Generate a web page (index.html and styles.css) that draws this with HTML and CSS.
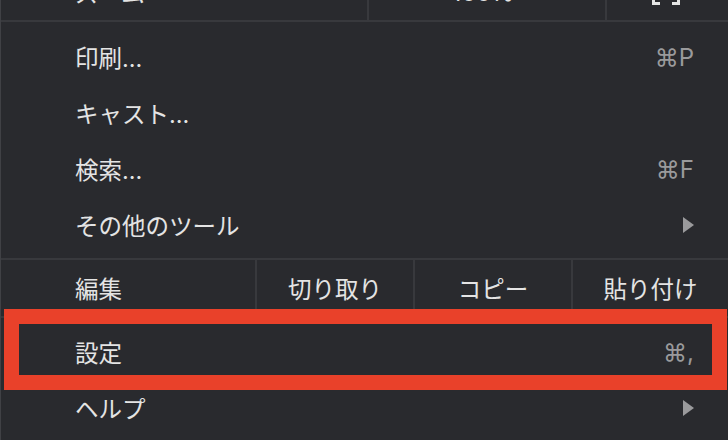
FILE: index.html
```html
<!DOCTYPE html>
<html lang="ja">
<head>
<meta charset="utf-8">
<link rel="stylesheet" href="styles.css">
</head>
<body>
<div class="menu">
  <div class="zoom-row">
    <div class="cell label">ズーム</div>
    <div class="cell zoom-ctrl"><span>−</span><span>100%</span><span>+</span></div>
    <div class="cell fs">
      <svg width="28" height="26" viewBox="0 0 28 26"><path d="M1.5 8V1.5H8M20 1.5h6.5V8M26.5 18v6.5H20M8 24.5H1.5V18" fill="none" stroke="#e4e4e4" stroke-width="3"/></svg>
    </div>
  </div>
  <div class="section top">
    <div class="item"><span>印刷...</span><span class="sc">⌘P</span></div>
    <div class="item"><span>キャスト...</span></div>
    <div class="item"><span>検索...</span><span class="sc">⌘F</span></div>
    <div class="item"><span>その他のツール</span><svg class="arrow" width="11" height="16" viewBox="0 0 11 16"><path d="M0 0L11 8L0 16Z" fill="#9a9a9c"/></svg></div>
  </div>
  <div class="edit-row">
    <div class="cell label">編集</div>
    <div class="cell btn">切り取り</div>
    <div class="cell btn">コピー</div>
    <div class="cell btn">貼り付け</div>
  </div>
  <div class="section bottom">
    <div class="item marked"><span>設定</span><span class="sc">⌘,</span><div class="redbox"></div></div>
    <div class="item"><span>ヘルプ</span><svg class="arrow" width="11" height="16" viewBox="0 0 11 16"><path d="M0 0L11 8L0 16Z" fill="#9a9a9c"/></svg></div>
  </div>
</div>
</body>
</html>
```

FILE: styles.css
```css
html, body {
  margin: 0;
  padding: 0;
}
body {
  width: 728px;
  height: 440px;
  overflow: hidden;
  background: #292a2e;
  box-sizing: border-box;
  border-left: 1px solid #404145;
  font-family: Inter, "Noto Sans CJK JP", sans-serif;
  font-size: 23.5px;
  color: #e4e4e4;
}
.menu {
  margin-top: -36px;
}
.zoom-row {
  display: grid;
  grid-template-columns: 366px 238px 1fr;
  height: 56px;
  border-bottom: 2px solid #38393d;
}
.cell {
  display: flex;
  align-items: center;
}
.label {
  padding-left: 74px;
}
.zoom-ctrl {
  border-left: 2px solid #38393d;
  justify-content: space-between;
  padding: 0 30px 0 22px;
}
.fs {
  border-left: 2px solid #38393d;
  justify-content: center;
  padding-right: 4px;
}
.section.top {
  padding: 7px 0 5px;
}
.section.bottom {
  padding-top: 6px;
}
.item {
  position: relative;
  display: flex;
  align-items: center;
  justify-content: space-between;
  height: 56px;
  padding: 0 34px 0 74px;
}
.sc {
  font-size: 24px;
  color: #9a9a9c;
}
.arrow {
  display: block;
}
.edit-row {
  display: grid;
  grid-template-columns: 254px 158px 158px 1fr;
  height: 56px;
  border-top: 2px solid #38393d;
  border-bottom: 2px solid #38393d;
}
.btn {
  border-left: 2px solid #38393d;
  justify-content: center;
}
.redbox {
  position: absolute;
  left: 3px;
  right: 1px;
  top: -15px;
  height: 81px;
  box-sizing: border-box;
  border: 15px solid #e9412a;
}
```
